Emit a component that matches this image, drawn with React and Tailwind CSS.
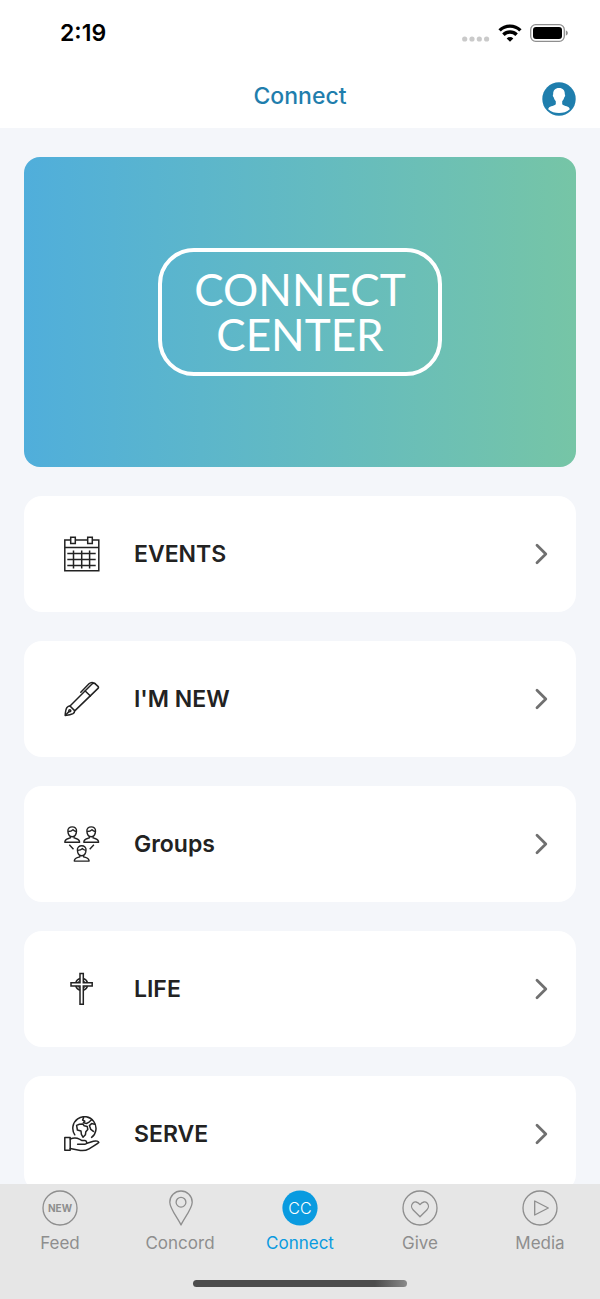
import React, { useState } from 'react';

const NEGRO = '#222222';

function IconEvents() {
  return (
    <svg viewBox="0 0 36 36" className="size-9" fill="none" stroke={NEGRO} strokeWidth="1.5" aria-hidden="true">
      <path d="M6.7 4H.8v30.800h34V4h-6.300M11.300 4h12.400M.8 11.400h34" />
      <path d="M6.700 1.200h4.600v6.200H6.700zM23.700 1.200h4.600v6.200h-4.600z" />
      <path d="M9.500 14.600v18M17.700 14.600v18M25.600 14.600v18M3.300 17.500h28.400M3.300 23.500h28.400M3.300 29.500h28.400" />
    </svg>
  );
}

function IconNew() {
  return (
    <svg viewBox="0 0 36 36" className="size-9" fill="none" stroke={NEGRO} strokeWidth="1.5" strokeLinejoin="round" strokeLinecap="round" aria-hidden="true">
      <path d="M1.200 34.400C1.400 31 1.600 28.400 3 26.400Q4.400 24.800 6 25L10.600 29.600Q10.800 31.400 9 32.600C7 33.800 4.400 34.200 1.200 34.400z" />
      <path d="M1.600 34L5.200 30.400" />
      <circle cx="5.800" cy="29.800" r="1" />
      <path d="M6 25L28 3Q29.500 1.600 31 2.600L34 5.400Q35 6.400 34 7.400L11 29.600" />
      <path d="M21.200 10L26.400 15" />
      <path d="M16.800 11.200L25 2.800Q26.400 1.400 28 1.400L31 2.400" />
    </svg>
  );
}

function Persona({ x, y }) {
  return (
    <g transform={`translate(${x} ${y})`}>
      <path d="M-4.300 4.200C-4.600 1.600-2.600 0 0 0S4.600 1.600 4.300 4.200L4 6.400C3.400 8.600 1.800 9.900 0 9.900S-3.400 8.600-4 6.400z" />
      <path d="M-4.100 4.600C-1.800 4.500-.4 4 .8 2.800C1.800 4 2.800 4.400 4.100 4.600" />
      <path d="M-1.900 9.600v1.400C-4.400 12-7.400 11.600-7.400 15.300H7.400C7.400 11.600 4.400 12 1.900 11V9.600" />
    </g>
  );
}

function IconGroups() {
  return (
    <svg viewBox="0 0 36 36" className="size-9" fill="none" stroke={NEGRO} strokeWidth="1.400" strokeLinejoin="round" aria-hidden="true">
      <Persona x={8.2} y={0.9} />
      <Persona x={27.2} y={0.9} />
      <Persona x={17.700} y={19.800} />
      <path d="M5.300 18.800l4.200 4.400M29.900 18.800l-4.200 4.400" />
    </svg>
  );
}

function IconLife() {
  return (
    <svg viewBox="0 0 36 36" className="size-9" fill="none" stroke={NEGRO} strokeWidth="1.500" aria-hidden="true">
      <path d="M16 2.500h3.300v9.200h8.900v3.300h-8.900v18.300H16V15H7v-3.300h9z" />
      <path d="M11.800 11.700A6.200 6.200 0 0 1 16 7.500M19.300 7.500A6.200 6.200 0 0 1 23.500 11.700M23.500 15A6.200 6.200 0 0 1 19.300 19.200M16 19.200A6.200 6.200 0 0 1 11.800 15" />
      <path d="M14 11.700Q14.400 10.100 16 9.700M19.300 9.700Q21 10.100 21.300 11.700M21.300 15Q21 16.700 19.300 17M16 17Q14.400 16.700 14 15" strokeWidth="1" />
    </svg>
  );
}

function IconServe() {
  return (
    <svg viewBox="0 0 36 36" className="size-9" fill="none" stroke={NEGRO} strokeWidth="1.500" strokeLinejoin="round" strokeLinecap="round" aria-hidden="true">
      <path d="M10.800 18.800A11.600 11.600 0 1 1 27.600 21.400" />
      <path d="M12.600 9.400L15.400 8.200L18.800 8L20.200 9.800L23.200 10.400L23.800 13.400L21.800 15.800L21.400 18.800L19 21.200L17.400 18.400L17 15L13.400 14z" />
      <path d="M19.600 1.600L18.600 4L20.800 5.200L19.400 6.800L22.800 7.400L25.400 5.800L27.600 3.800M30.600 8.200L27.600 7.600L25.400 9.600L26.800 13.400L29.400 15.400" />
      <path d="M.8 21.600h5.400v12.600H.8z" />
      <path d="M6.200 23C9.600 21.600 13 21.800 15.400 23.200L18 24.600H21C23.400 25 23.200 28.200 21 28.200H13.600" />
      <path d="M23 27.200L29.400 25.200C32.600 24.400 34.600 25.400 34.800 26.400C32 28.800 28.400 30.800 25 32.800C22 34.500 19.400 34.800 16.400 34.400L6.200 32.400" />
    </svg>
  );
}

function IconFeed() {
  return (
    <svg viewBox="0 0 36 36" className="size-9" aria-hidden="true">
      <circle cx="18" cy="18" r="17" fill="none" stroke="currentColor" strokeWidth="1.300" />
      <text x="18" y="21.600" textAnchor="middle" fill="currentColor" fontFamily="Inter, sans-serif" fontWeight="700" fontSize="10">NEW</text>
    </svg>
  );
}

function IconConcord() {
  return (
    <svg viewBox="0 0 36 36" className="ml-0.5 size-9" fill="none" stroke="currentColor" strokeWidth="1.300" strokeLinejoin="round" aria-hidden="true">
      <path d="M18 35C15 28.500 6.800 18.500 6.800 12.200a11.200 11.200 0 0 1 22.400 0C29.200 18.500 21 28.500 18 35z" />
      <circle cx="18" cy="12.200" r="4.900" />
    </svg>
  );
}

function IconConnect() {
  return (
    <svg viewBox="0 0 36 36" className="size-9" aria-hidden="true">
      <circle cx="18" cy="18" r="17.600" fill="#0a9be0" />
      <text x="18" y="23.700" textAnchor="middle" fill="#ffffff" fontFamily="Inter, sans-serif" fontWeight="300" fontSize="16">CC</text>
    </svg>
  );
}

function IconGive() {
  return (
    <svg viewBox="0 0 36 36" className="size-9" fill="none" stroke="currentColor" strokeWidth="1.300" strokeLinejoin="round" aria-hidden="true">
      <circle cx="18" cy="18" r="17" />
      <path d="M18 26.800L11.200 20C6.600 15.200 12.800 8 18 14.600C23.200 8 29.400 15.200 24.800 20z" />
    </svg>
  );
}

function IconMedia() {
  return (
    <svg viewBox="0 0 36 36" className="size-9" fill="none" stroke="currentColor" strokeWidth="1.300" strokeLinejoin="round" aria-hidden="true">
      <circle cx="18" cy="18" r="17" />
      <path d="M12.700 11v14l13.600-7z" />
    </svg>
  );
}

const opciones = [
  { id: 'events', titulo: 'EVENTS', Icono: IconEvents },
  { id: 'new', titulo: "I'M NEW", Icono: IconNew },
  { id: 'groups', titulo: 'Groups', Icono: IconGroups },
  { id: 'life', titulo: 'LIFE', Icono: IconLife },
  { id: 'serve', titulo: 'SERVE', Icono: IconServe }
];

const pestanas = [
  { id: 'feed', titulo: 'Feed', Icono: IconFeed },
  { id: 'concord', titulo: 'Concord', Icono: IconConcord },
  { id: 'connect', titulo: 'Connect', Icono: IconConnect },
  { id: 'give', titulo: 'Give', Icono: IconGive },
  { id: 'media', titulo: 'Media', Icono: IconMedia }
];

function StatusBar() {
  return (
    <div className="flex h-16 items-center justify-between pt-0.5 pr-8 pl-15">
      <span className="text-[23px] font-semibold text-black">2:19</span>
      <div className="flex items-center gap-2">
        <svg viewBox="0 0 28 18" className="h-[18px] w-7" fill="#cacaca" aria-hidden="true">
          <circle cx="2.700" cy="15" r="2.600" />
          <circle cx="10" cy="15" r="2.600" />
          <circle cx="17.300" cy="15" r="2.600" />
          <circle cx="24.600" cy="15" r="2.600" />
        </svg>
        <svg viewBox="0 0 24 18" className="h-[18px] w-6" fill="none" stroke="#000000" strokeWidth="3.400" aria-hidden="true">
          <path d="M1.600 6.400A14.900 14.900 0 0 1 22.400 6.400" />
          <path d="M5.400 10.800A9.300 9.300 0 0 1 18.600 10.800" />
          <path d="M12 17.800L8.700 14.400A4.700 4.700 0 0 1 15.300 14.400z" fill="#000000" stroke="none" />
        </svg>
        <svg viewBox="0 0 38 18" className="h-[18px] w-[38px]" aria-hidden="true">
          <rect x=".7" y=".7" width="33.600" height="16.600" rx="5" fill="none" stroke="#8e8e8e" strokeWidth="1.300" />
          <rect x="3" y="3" width="29" height="12" rx="3" fill="#000000" />
          <path d="M35.800 6.200Q37.900 7.200 37.900 9T35.800 11.800z" fill="#8e8e8e" />
        </svg>
      </div>
    </div>
  );
}

export default function App() {
  const [activa, setActiva] = useState('connect');

  return (
    <div className="flex h-screen flex-col bg-[#f4f6fa] font-['Inter',sans-serif]">
      <header className="shrink-0 bg-white">
        <StatusBar />
        <div className="grid h-16 grid-cols-[1fr_auto_1fr] items-center px-6">
          <h1 className="col-start-2 text-[23px] font-medium text-[#1f7ead]">Connect</h1>
          <button type="button" aria-label="Profile" className="mt-1.5 justify-self-end">
            <svg viewBox="0 0 34 34" className="size-[34px]" aria-hidden="true">
              <circle cx="17" cy="17" r="16.700" fill="#1f7ead" />
              <path d="M17 6C20.900 6 23 8.400 22.800 12.200C23.600 13 23.100 14.600 22.200 15.400C21.800 17.200 20.900 18.400 20.200 19.200V22.200C22.400 24.600 27.400 23.700 27.800 27.300C24.800 30.200 21 31 17 31S9.200 30.200 6.200 27.300C6.600 23.700 11.600 24.600 13.800 22.200V19.200C13.100 18.400 12.200 17.200 11.800 15.400C10.900 14.600 10.400 13 11.200 12.200C11 8.400 13.100 6 17 6z" fill="#ffffff" />
            </svg>
          </button>
        </div>
      </header>

      <main className="flex min-h-0 flex-1 flex-col gap-[29px] overflow-y-auto px-6 py-[29px] [scrollbar-width:none]">
        <div className="flex aspect-[552/310] shrink-0 items-center justify-center rounded-2xl bg-linear-to-r from-[#50aedb] to-[#76c5a6]">
          <div className="rounded-[36px] border-4 border-white px-8 py-[15px] text-center font-['Lato',sans-serif] text-[44px] leading-[45px] text-white">
            CONNECT
            <br />
            CENTER
          </div>
        </div>

        {opciones.map(({ id, titulo, Icono }) => (
          <button
            key={id}
            type="button"
            className="flex h-[116px] shrink-0 items-center rounded-[18px] bg-white pr-7 pl-10 text-left"
          >
            <Icono />
            <span className="ml-[34px] flex-1 text-[23px] font-semibold text-[#222222]">{titulo}</span>
            <svg viewBox="0 0 13 22" className="h-[22px] w-[13px]" fill="none" stroke="#707070" strokeWidth="2.800" strokeLinecap="round" strokeLinejoin="round" aria-hidden="true">
              <path d="M2 2.200L10.800 11L2 19.800" />
            </svg>
          </button>
        ))}
      </main>

      <nav className="shrink-0 bg-[#e6e6e6] pt-1.5 pb-3">
        <div className="grid grid-cols-5">
          {pestanas.map(({ id, titulo, Icono }) => (
            <button
              key={id}
              type="button"
              onClick={() => setActiva(id)}
              className={`flex flex-col items-center gap-1 ${
                activa === id ? 'text-[#0a9be0]' : 'text-[#8e8e8e]'
              }`}
            >
              <Icono />
              <span className="text-[17px] leading-[26px]">{titulo}</span>
            </button>
          ))}
        </div>
        <div className="mx-auto mt-6 h-[7px] w-[214px] rounded-full bg-linear-to-r from-[#4c4c4c] from-85% to-[#8a8a8a]" />
      </nav>
    </div>
  );
}
